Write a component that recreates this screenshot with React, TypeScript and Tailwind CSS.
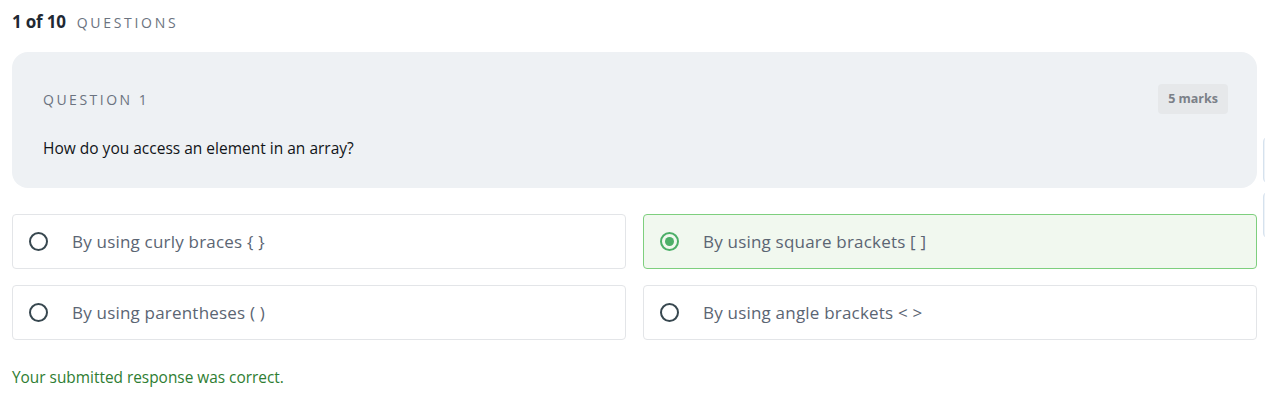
import React from 'react';

type Option = { id: string; label: string };

const options: Option[] = [
  { id: 'a', label: 'By using curly braces { }' },
  { id: 'b', label: 'By using square brackets [ ]' },
  { id: 'c', label: 'By using parentheses ( )' },
  { id: 'd', label: 'By using angle brackets < >' },
];

const Radio: React.FC<{ checked: boolean }> = ({ checked }) =>
  checked ? (
    <span className="flex h-[19px] w-[19px] shrink-0 items-center justify-center rounded-full border-2 border-[#4caf68]">
      <span className="h-[9px] w-[9px] rounded-full bg-[#4caf68]" />
    </span>
  ) : (
    <span className="block h-[19px] w-[19px] shrink-0 rounded-full border-2 border-[#37474f]" />
  );

const App: React.FC = () => {
  const selected = 'b';

  return (
    <div className="relative min-h-screen bg-white font-['Open_Sans',sans-serif] pl-3 pr-2 pt-[9px]">
      <div className="flex h-[26px] items-center gap-[11px]">
        <span className="text-[17px] font-bold text-[#1f2933] tracking-[-0.2px]">1 of 10</span>
        <span className="text-[14px] tracking-[2.7px] text-[#6b7380]">QUESTIONS</span>
      </div>

      <div className="mt-[17px] rounded-2xl bg-[#eef1f4] pl-[31px] pr-[29px] pt-[31px] pb-[29px]">
        <div className="flex h-[32px] items-center justify-between">
          <span className="text-[14px] tracking-[2.5px] text-[#6b7380]">QUESTION 1</span>
          <span className="rounded-[4px] bg-[#e6e8ea] px-[10px] py-[6px] text-[12.5px] font-bold text-[#7b8088]">
            5 marks
          </span>
        </div>
        <p className="mt-[22px] h-[22px] text-[15.5px] leading-[22px] text-[#111418]">
          How do you access an element in an array?
        </p>
      </div>

      <div className="mt-[26px] grid grid-cols-2 gap-x-[17px] gap-y-[16px]">
        {options.map((o) => {
          const on = o.id === selected;
          return (
            <div
              key={o.id}
              className={
                on
                  ? 'flex h-[55px] items-center gap-[24px] rounded-[4px] border border-[#7ecf7e] bg-[#f1f8ef] px-[16px]'
                  : 'flex h-[55px] items-center gap-[24px] rounded-[4px] border border-[#e3e5e8] bg-white px-[16px]'
              }
            >
              <Radio checked={on} />
              <span className="text-[17px] tracking-[0.2px] text-[#5b6573]">{o.label}</span>
            </div>
          );
        })}
      </div>

      <p className="mt-[27px] text-[15.4px] leading-[22px] text-[#2e7d32]">Your submitted response was correct.</p>

      <div className="absolute right-[-6px] top-[136px] h-[48px] w-[8px] rounded-l-md border border-[#d6e2ee] bg-[#eef3f8]" />
      <div className="absolute right-[-6px] top-[191px] h-[48px] w-[8px] rounded-l-md border border-[#d6e2ee] bg-[#eef3f8]" />
    </div>
  );
};

export default App;
